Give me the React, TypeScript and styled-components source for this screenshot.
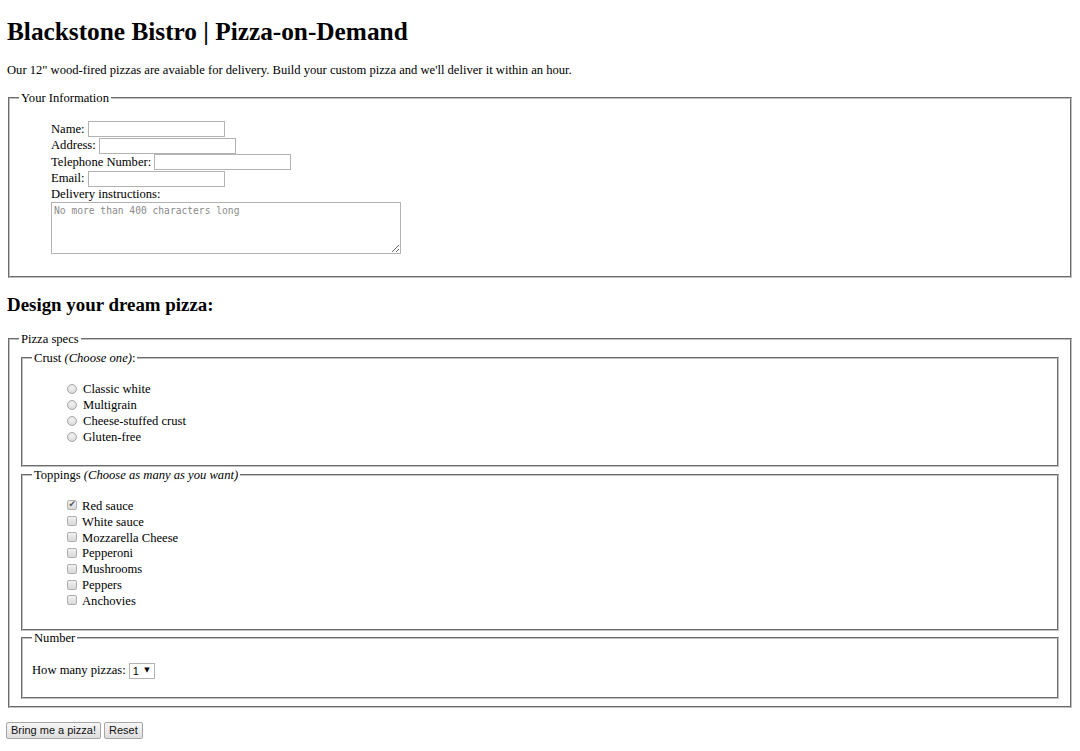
import React from "react";
import styled, { createGlobalStyle } from "styled-components";

const Global = createGlobalStyle`
  html, body { margin: 0; padding: 0; background: #fff; }
  body { font-family: "Liberation Serif", "Times New Roman", serif; font-size: 12.6px; color: #000; }
  * { box-sizing: border-box; }
`;

const Page = styled.div`
  padding: 1px 6px 12px;
`;

const Title = styled.h1`
  font-size: 25.3px;
  font-weight: bold;
  margin: 16px 1px 17px;
  line-height: normal;
`;

const Intro = styled.p`
  margin: 0 1px 13px;
  line-height: normal;
`;

const SubTitle = styled.h2`
  font-size: 18.9px;
  font-weight: bold;
  margin: 16px 1px 16px;
  line-height: normal;
`;

const Fieldset = styled.fieldset<{ $nested?: boolean }>`
  margin: ${(p) => (p.$nested ? "0.5px 2px 0" : "0 2px")};
  padding: 4px 9px 7.5px;
  border: 2px groove #c0c0c0;
  min-width: 0;
`;

const Legend = styled.legend`
  padding: 0 2px;
  font-size: 12.6px;
  line-height: 14px;
`;

const InfoList = styled.div`
  margin: 12px 0 0;
  padding: 0 0 15px 32px;
`;

const FieldRow = styled.div`
  display: flex;
  align-items: center;
  gap: 3px;
  height: 16.5px;
  white-space: nowrap;
`;

const LabelRow = styled.div`
  height: 14px;
  line-height: 14px;
`;

const TextInput = styled.input`
  width: 137px;
  height: 16px;
  margin: 0;
  padding: 1px 2px;
  border: 1px solid #b3b3b3;
  font-size: 11px;
  font-family: "Liberation Sans", Arial, sans-serif;
  background: #fff;
`;

const TextArea = styled.textarea`
  display: block;
  width: 350px;
  height: 52px;
  margin: 0.5px 0 0;
  padding: 2px;
  border: 1px solid #b3b3b3;
  font-family: "DejaVu Sans Mono", "Liberation Mono", monospace;
  font-size: 9.65px;
  line-height: 1.2;
  &::placeholder { color: #8a8a8a; }
`;

const OptionList = styled.ul`
  list-style: none;
  margin: 13px 0 12px;
  padding-left: 30px;
`;

const OptionRow = styled.li<{ $h: number }>`
  display: flex;
  align-items: center;
  height: ${(p) => p.$h}px;
  white-space: nowrap;
`;

const Radio = styled.input.attrs({ type: "radio" })`
  appearance: none;
  width: 10px;
  height: 10px;
  margin: 0 6px 0 5px;
  border: 1px solid #a8a8a8;
  border-radius: 50%;
  background: radial-gradient(circle at 50% 35%, #f4f4f4 0%, #dcdcdc 70%, #cfcfcf 100%);
  position: relative;
  top: -1px;
`;

const Check = styled.input.attrs({ type: "checkbox" })`
  appearance: none;
  width: 10px;
  height: 10px;
  margin: 0 5px 0 5px;
  border: 1px solid #b0b0b0;
  border-radius: 2px;
  background: linear-gradient(#f2f2f2, #d8d8d8);
  position: relative;
  top: -1px;
  &:checked::before {
    content: "✔";
    position: absolute;
    left: 0.5px;
    top: -2.5px;
    font-size: 9px;
    color: #555;
    font-family: "DejaVu Sans", sans-serif;
  }
`;

const NumberLine = styled.p`
  margin: 13px 0 10px;
  display: flex;
  align-items: center;
  gap: 3px;
  height: 17px;
`;

const SelectWrap = styled.span`
  position: relative;
  display: inline-block;
`;

const Select = styled.select`
  appearance: none;
  width: 26px;
  height: 16px;
  margin: 0;
  padding: 0 0 0 3px;
  border: 1px solid #b3b3b3;
  border-radius: 0;
  background: #fff;
  font-family: "Liberation Sans", Arial, sans-serif;
  font-size: 11px;
  color: #000;
`;

const Arrow = styled.span`
  position: absolute;
  right: 5px;
  top: 3px;
  font-size: 7px;
  pointer-events: none;
  font-family: "DejaVu Sans", sans-serif;
`;

const ButtonBar = styled.div`
  margin-top: 14px;
  display: flex;
  gap: 3px;
`;

const Button = styled.button`
  height: 17px;
  padding: 0 4px;
  border: 1px solid #a6a6a6;
  border-radius: 2px;
  background: linear-gradient(#f6f6f6, #dedede);
  font-family: "Liberation Sans", Arial, sans-serif;
  font-size: 11px;
  color: #111;
  line-height: 15px;
`;

const crusts = ["Classic white", "Multigrain", "Cheese-stuffed crust", "Gluten-free"];
const toppings = [
  "Red sauce",
  "White sauce",
  "Mozzarella Cheese",
  "Pepperoni",
  "Mushrooms",
  "Peppers",
  "Anchovies",
];

export default function App() {
  return (
    <Page>
      <Global />
      <Title>Blackstone Bistro | Pizza-on-Demand</Title>
      <Intro>
        Our 12" wood-fired pizzas are avaiable for delivery. Build your custom pizza and we'll deliver it within an hour.
      </Intro>
      <form onSubmit={(e) => e.preventDefault()}>
        <Fieldset>
          <Legend>Your Information</Legend>
          <InfoList>
            <FieldRow>
              <span>Name:</span>
              <TextInput type="text" />
            </FieldRow>
            <FieldRow>
              <span>Address:</span>
              <TextInput type="text" />
            </FieldRow>
            <FieldRow>
              <span>Telephone Number:</span>
              <TextInput type="tel" />
            </FieldRow>
            <FieldRow>
              <span>Email:</span>
              <TextInput type="email" />
            </FieldRow>
            <LabelRow>Delivery instructions:</LabelRow>
            <TextArea placeholder="No more than 400 characters long" />
          </InfoList>
        </Fieldset>

        <SubTitle>Design your dream pizza:</SubTitle>

        <Fieldset>
          <Legend>Pizza specs</Legend>
          <Fieldset $nested>
            <Legend>
              Crust <em>(Choose one)</em>:
            </Legend>
            <OptionList>
              {crusts.map((c) => (
                <OptionRow key={c} $h={16}>
                  <Radio name="crust" />
                  <span>{c}</span>
                </OptionRow>
              ))}
            </OptionList>
          </Fieldset>
          <Fieldset $nested>
            <Legend>
              Toppings <em>(Choose as many as you want)</em>
            </Legend>
            <OptionList>
              {toppings.map((t, i) => (
                <OptionRow key={t} $h={15.83}>
                  <Check defaultChecked={i === 0} />
                  <span>{t}</span>
                </OptionRow>
              ))}
            </OptionList>
          </Fieldset>
          <Fieldset $nested>
            <Legend>Number</Legend>
            <NumberLine>
              <span>How many pizzas:</span>
              <SelectWrap>
                <Select defaultValue="1">
                  <option value="1">1</option>
                  <option value="2">2</option>
                  <option value="3">3</option>
                  <option value="4">4</option>
                  <option value="5">5</option>
                </Select>
                <Arrow>▼</Arrow>
              </SelectWrap>
            </NumberLine>
          </Fieldset>
        </Fieldset>

        <ButtonBar>
          <Button type="submit">Bring me a pizza!</Button>
          <Button type="reset">Reset</Button>
        </ButtonBar>
      </form>
    </Page>
  );
}
